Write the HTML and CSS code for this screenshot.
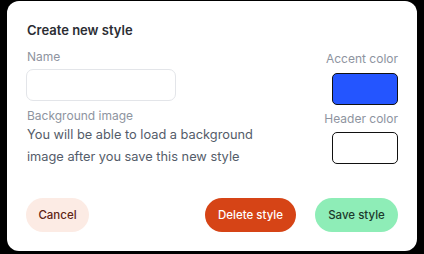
FILE: index.html
```html
<!DOCTYPE html>
<html lang="en">
<head>
    <meta charset="UTF-8">
    <meta name="viewport" content="width=device-width, initial-scale=1.0">
    <title>Create new style</title>
    <link rel="stylesheet" href="styles.css">
</head>
<body>
    <div class="modal">
        <h2 class="modal-title">Create new style</h2>

        <div class="form-row">
            <div class="form-main">
                <label class="field-label" for="style-name">Name</label>
                <input class="text-input" id="style-name" type="text">

                <div class="field-label bg-label">Background image</div>
                <p class="bg-note">You will be able to load a background image after you save this new style</p>
            </div>

            <div class="form-side">
                <div class="field-label">Accent color</div>
                <div class="swatch swatch-accent"></div>

                <div class="field-label header-label">Header color</div>
                <div class="swatch swatch-header"></div>
            </div>
        </div>

        <div class="modal-actions">
            <button class="btn btn-cancel">Cancel</button>
            <div class="actions-right">
                <button class="btn btn-delete">Delete style</button>
                <button class="btn btn-save">Save style</button>
            </div>
        </div>
    </div>
</body>
</html>
```

FILE: styles.css
```css
* {
    margin: 0;
    padding: 0;
    box-sizing: border-box;
}

body {
    font-family: Inter, 'Noto Sans', sans-serif;
    background: #000;
    padding: 1px 7px 3px;
    min-height: 100vh;
}

.modal {
    background: #fff;
    border-radius: 12px;
    width: 410px;
    height: 250px;
    padding: 21px 19px 19px;
    display: flex;
    flex-direction: column;
}

.modal-title {
    font-size: 13px;
    line-height: 16px;
    font-weight: 600;
    color: #2b2d33;
    margin-left: 1px;
    margin-bottom: 11px;
}

.form-row {
    display: flex;
    justify-content: space-between;
}

.field-label {
    display: block;
    font-size: 12px;
    line-height: 16px;
    color: #8e94a0;
    margin-left: 1px;
}

.text-input {
    display: block;
    width: 150px;
    height: 32px;
    margin-top: 4px;
    border: 1px solid #e3e5e9;
    border-radius: 7px;
    background: #fff;
    outline: none;
}

.bg-label {
    margin-top: 7px;
}

.bg-note {
    font-size: 12.8px;
    line-height: 22px;
    color: #545c69;
    width: 240px;
    margin-left: 1px;
}

.form-side {
    display: flex;
    flex-direction: column;
    align-items: flex-end;
    margin-top: 2px;
}

.swatch {
    width: 66px;
    height: 32px;
    border: 1px solid #111;
    border-radius: 5px;
    margin-top: 6px;
}

.swatch-accent {
    background: #2455ff;
}

.swatch-header {
    background: #fff;
    margin-top: 5px;
}

.header-label {
    margin-top: 6px;
}

.modal-actions {
    margin-top: auto;
    display: flex;
    justify-content: space-between;
    align-items: center;
}

.actions-right {
    display: flex;
    gap: 19px;
}

.btn {
    font-family: Inter, 'Noto Sans', sans-serif;
    font-size: 11.5px;
    font-weight: 500;
    height: 34px;
    padding: 0;
    white-space: nowrap;
    text-align: center;
    border: none;
    border-radius: 17px;
    cursor: pointer;
}

.btn-cancel {
    background: #fcebe4;
    color: #5e2414;
    width: 63px;
}

.btn-delete {
    background: #d64416;
    color: #fff;
    width: 91px;
}

.btn-save {
    background: #8eedb7;
    color: #1c3a2c;
    width: 83px;
}
```
